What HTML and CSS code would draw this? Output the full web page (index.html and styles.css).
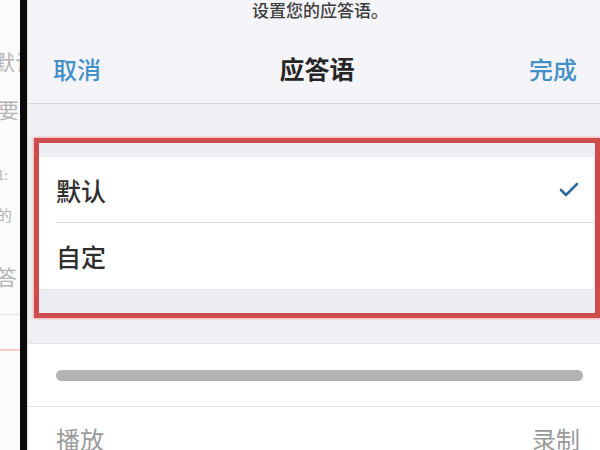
FILE: index.html
```html
<!DOCTYPE html>
<html lang="zh">
<head>
<meta charset="utf-8">
<title>应答语</title>
<link rel="stylesheet" href="styles.css">
</head>
<body>
<div class="page">
  <div class="side">
    <div class="side-line l1">默认</div>
    <div class="side-line l2">要</div>
    <div class="side-line l3">1:</div>
    <div class="side-line l4">的</div>
    <div class="side-line l5">答</div>
    <div class="side-sep"></div>
    <div class="side-pink"></div>
  </div>
  <div class="divider"></div>
  <div class="panel">
    <div class="header">
      <div class="hint">设置您的应答语。</div>
      <div class="nav">
        <span class="nav-btn">取消</span>
        <span class="nav-title">应答语</span>
        <span class="nav-btn">完成</span>
      </div>
    </div>
    <div class="gap-top"></div>
    <div class="highlight">
      <div class="band-top"></div>
      <div class="row">
        <span class="row-label">默认</span>
        <svg class="check" width="20" height="15" viewBox="0 0 20 15"><path d="M2 8 L7 13 L18 2" fill="none" stroke="#2f6c9c" stroke-width="2.6" stroke-linecap="round" stroke-linejoin="round"/></svg>
      </div>
      <div class="row row-last">
        <span class="row-label">自定</span>
      </div>
      <div class="band-bottom"></div>
    </div>
    <div class="gap-mid"></div>
    <div class="player">
      <div class="track"><div class="bar"></div></div>
      <div class="controls">
        <span class="ctl">播放</span>
        <span class="ctl">录制</span>
      </div>
    </div>
  </div>
</div>
</body>
</html>
```

FILE: styles.css
```css
* { box-sizing: border-box; }
html, body { margin: 0; padding: 0; }
body {
  width: 600px;
  height: 450px;
  overflow: hidden;
  font-family: "Noto Sans CJK SC", "Noto Sans", sans-serif;
  background: #ffffff;
}
.page {
  display: flex;
  width: 600px;
  height: 450px;
}
.side {
  width: 20px;
  flex: none;
  background: #fbfbfb;
  overflow: hidden;
  display: flex;
  flex-direction: column;
  color: #b4b4b4;
  white-space: nowrap;
}
.side > * { flex-shrink: 0; }
.side-line { margin-left: -6px; line-height: 1; }
.l1 { font-size: 21px; margin-top: 51px; }
.l2 { font-size: 21px; margin-top: 27px; margin-left: -2px; }
.l3 { font-size: 13px; margin-top: 48px; margin-left: -3px; }
.l4 { font-size: 15px; margin-top: 26px; margin-left: -3px; }
.l5 { font-size: 21px; margin-top: 44px; margin-left: -4px; }
.side-sep { height: 1px; background: #e6e6e6; margin-top: 27px; }
.side-pink { height: 2px; background: #f4cccc; margin-top: 34px; }
.divider {
  width: 7px;
  flex: none;
  background: #0a0a0a;
}
.panel {
  flex: 1;
  display: flex;
  flex-direction: column;
  background: #efeff4;
  border-left: 1px solid #dcdce0;
  overflow: hidden;
}
.panel > * { flex-shrink: 0; }
.header {
  background: #f5f4f9;
  border-bottom: 1px solid #d6d6da;
  height: 104px;
}
.hint {
  height: 20px;
  line-height: 20px;
  text-align: center;
  font-size: 17px;
  font-weight: 500;
  color: #3e3e3e;
  padding-left: 12px;
}
.nav {
  display: flex;
  justify-content: space-between;
  align-items: center;
  height: 48px;
  margin-top: 24px;
  padding: 0 23px 0 25px;
}
.nav-btn {
  font-size: 24px;
  font-weight: 500;
  color: #4390c6;
}
.nav-title {
  font-size: 25px;
  font-weight: bold;
  color: #262626;
  margin-left: 4px;
}
.gap-top { height: 34px; }
.highlight {
  margin-left: 6px;
  border: 5px solid #cd4d4d;
  box-shadow: 0 0 2px 1px #f3b4b4;
  background: #ffffff;
}
.band-top { height: 14px; background: #edeef3; }
.row {
  height: 66px;
  display: flex;
  align-items: center;
  justify-content: space-between;
  padding: 0 19px 0 0;
  border-bottom: 1px solid #dedee2;
  margin-left: 17px;
  border-right: 1px solid #e4e4ea;
}
.row-last { border-bottom: none; }
.row-label {
  font-size: 25px;
  font-weight: 500;
  color: #2e2e2e;
}
.check { margin-right: -4px; }
.band-bottom { height: 24px; background: #edeef3; border-top: 1px solid #e2e2e6; }
.gap-mid { height: 25px; }
.player {
  flex: 1;
  background: #ffffff;
  border-top: 1px solid #e4e4e8;
}
.track {
  height: 63px;
  padding: 26px 17px 0 28px;
  border-bottom: 1px solid #e2e2e6;
}
.bar {
  height: 11px;
  border-radius: 6px;
  background: #b3b3b3;
}
.controls {
  display: flex;
  justify-content: space-between;
  padding: 14px 20px 0 28px;
}
.ctl {
  font-size: 24px;
  color: #9a9a9a;
}
```
